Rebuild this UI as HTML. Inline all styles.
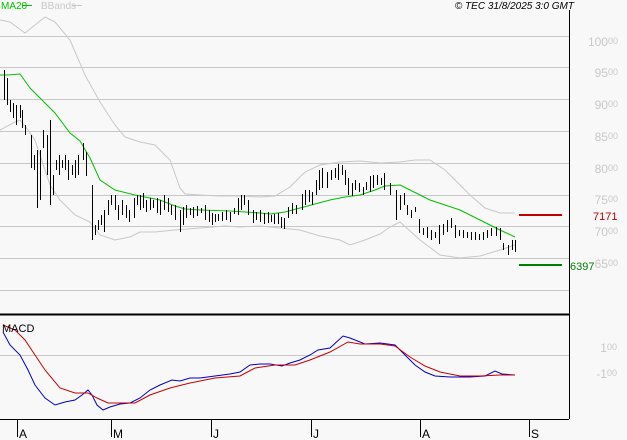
<!DOCTYPE html>
<html><head><meta charset="utf-8"><style>
html,body{margin:0;padding:0;background:#f8f8f8;}
body{width:627px;height:440px;overflow:hidden;position:relative;font-family:"Liberation Sans",sans-serif;}
svg{position:absolute;left:0;top:0}
.ax{fill:#c8c8c8;font-size:12px;}
.ax tspan.s{font-size:9px}
</style></head><body>
<svg width="627" height="440" viewBox="0 0 627 440">
<rect width="627" height="440" fill="#f8f8f8"/>
<g stroke="#c8c8c8" stroke-width="1" shape-rendering="crispEdges">
<line x1="0" y1="36.5" x2="569" y2="36.5"/>
<line x1="0" y1="67.5" x2="569" y2="67.5"/>
<line x1="0" y1="99.5" x2="569" y2="99.5"/>
<line x1="0" y1="131.5" x2="569" y2="131.5"/>
<line x1="0" y1="163.5" x2="569" y2="163.5"/>
<line x1="0" y1="195.5" x2="569" y2="195.5"/>
<line x1="0" y1="226.5" x2="569" y2="226.5"/>
<line x1="0" y1="258.5" x2="569" y2="258.5"/>
<line x1="0" y1="290.5" x2="569" y2="290.5"/>
<line x1="0" y1="355.5" x2="569" y2="355.5"/>
</g>
<g fill="none" stroke="#c8c8c8" stroke-width="1">
<polyline points="0,20 10,22 25,33 35,25 45,17 55,22 70,40 85,75 100,102 115,125 125,137 140,142 155,145 170,160 180,188 185,194 200,195 220,196 240,196 260,197 275,196 290,187 305,172 320,165 340,162 360,161 380,163 400,162 415,160 430,160 445,170 470,195 485,208 500,213 515,213"/>
<polyline points="0,130 15,122 20,120 25,126 35,140 50,185 60,200 75,215 90,222 100,235 115,240 130,237 140,232 155,232 175,230 200,228 225,226 240,227 260,226 280,228 300,230 320,236 340,240 350,245 365,240 380,234 390,227 400,222 420,240 440,255 460,258 480,256 500,250 515,245"/>
</g>
<polyline fill="none" stroke="#00c000" stroke-width="1" points="0,75 8,75 20,74 30,88 45,103 55,113 70,133 80,141 90,158 100,180 115,190 135,195 145,197 160,200 175,206 185,209 200,210 230,211 260,213 270,214 285,212 300,208 315,204 330,200 345,197 360,195 375,190 385,186 400,185 410,190 430,200 460,210 480,220 500,230 515,237"/>
<path transform="translate(0.5,0)" shape-rendering="crispEdges" fill="none" stroke="#000" stroke-width="1" d="M4 70V100M7 78V105M10 100V112M13 103V118M16 105V125M20 105V118M22 110V128M25 125V135M31 135V168M34 155V170M37 150V208M40 150V200M43 130V148M47 135V175M50 120V205M53 175V195M56 160V170M59 155V175M62 160V168M65 155V170M68 160V180M72 165V175M75 160V178M78 155V175M83 143V160M86 152V176M92 185V240M95 225V235M98 220V230M101 215V225M104 210V232M108 200V215M111 195V205M115 195V210M118 205V220M122 200V215M126 205V218M129 210V222M134 198V218M137 195V205M140 195V210M143 193V208M146 200V212M150 198V210M153 200V208M157 198V213M160 200V215M164 195V210M168 198V212M171 205V215M175 205V220M180 210V232M183 207V225M186 205V218M190 208V215M193 207V218M197 206V216M201 208V213M205 205V220M209 210V222M212 213V225M215 214V222M218 214V221M222 212V221M226 210V220M230 212V222M234 208V214M238 198V215M241 195V210M244 195V205M248 200V215M253 210V223M256 212V220M260 210V222M264 213V224M268 212V223M271 215V222M274 214V224M278 213V224M281 217V228M284 218V229M288 207V218M292 203V214M296 205V214M302 194V210M305 190V205M309 190V202M312 192V205M316 180V195M319 170V190M322 168V188M327 172V188M331 170V180M335 168V178M338 164V180M342 165V175M345 170V185M348 178V195M352 183V196M355 180V190M359 183V192M363 187V195M366 182V190M370 176V192M373 175V188M377 175V185M381 178V185M384 173V190M390 183V195M396 190V220M400 195V210M404 193V205M407 205V215M411 210V218M415 207V212M419 219V233M423 228V235M427 227V238M431 230V240M435 232V238M439 225V244M443 224V235M447 220V232M451 218V228M455 225V238M459 230V236M463 230V238M467 232V238M471 232V240M475 232V240M479 234V240M483 232V240M487 230V238M491 228V236M496 227V236M500 228V240M503 243V250M508 245V255M512 240V250M515 240V252"/>
<line x1="519" y1="215" x2="562" y2="215" stroke="#c00000" stroke-width="2"/>
<line x1="519" y1="265" x2="562" y2="265" stroke="#008000" stroke-width="2"/>
<line x1="569.5" y1="10" x2="569.5" y2="419" stroke="#000" stroke-width="1"/>
<line x1="0" y1="314.5" x2="569" y2="314.5" stroke="#000" stroke-width="2"/>
<line x1="0" y1="419.5" x2="569" y2="419.5" stroke="#000" stroke-width="1"/>
<g stroke="#000" stroke-width="1">
<line x1="17.5" y1="420" x2="17.5" y2="437"/>
<line x1="111.5" y1="420" x2="111.5" y2="437"/>
<line x1="211.5" y1="420" x2="211.5" y2="437"/>
<line x1="311.5" y1="420" x2="311.5" y2="437"/>
<line x1="420.5" y1="420" x2="420.5" y2="437"/>
<line x1="529.5" y1="420" x2="529.5" y2="437"/>
</g>
<g font-size="12" fill="#000">
<text x="19" y="438">A</text><text x="113" y="438">M</text><text x="213" y="438">J</text>
<text x="313" y="438">J</text><text x="422" y="438">A</text><text x="531" y="438">S</text>
</g>
<polyline fill="none" stroke="#0000c8" stroke-width="1" points="3,332 10,345 20,355 28,370 35,385 45,398 55,405 65,402 75,400 82,395 88,390 92,395 97,405 103,410 110,407 120,404 130,403 140,398 150,390 160,385 172,380 180,381 190,378 200,378 215,376 230,374 240,372 250,365 260,364 270,364 282,366 290,363 300,360 310,355 318,350 330,348 343,336 350,338 365,344 380,343 395,345 405,355 415,365 425,372 435,376 450,377 470,377 485,376 495,371 502,374 515,375"/>
<polyline fill="none" stroke="#c80000" stroke-width="1" points="3,325 15,330 25,340 35,355 45,370 60,388 75,393 88,393 97,398 108,403 135,403 150,395 170,388 190,383 215,378 240,376 255,368 275,365 295,365 310,360 330,352 348,342 360,344 380,344 395,346 410,357 425,366 440,372 460,376 480,376 500,375 515,375"/>
<text x="2" y="332" font-size="11" fill="#000">MACD</text>
<text x="1" y="9" font-size="10" fill="#00c000">MA20</text>
<line x1="22" y1="5.5" x2="32" y2="5.5" stroke="#00c000"/>
<text x="41" y="9" font-size="10" fill="#c8c8c8">BBands</text>
<line x1="72" y1="5.5" x2="82" y2="5.5" stroke="#c8c8c8"/>
<text x="574" y="9" font-size="10" font-style="italic" fill="#000" text-anchor="end">© TEC 31/8/2025 3:0 GMT</text>
<g class="ax" text-anchor="end">
<text x="618" y="46">100<tspan class="s" dy="-2">00</tspan></text>
<text x="618" y="77">95<tspan class="s" dy="-2">00</tspan></text>
<text x="618" y="109">90<tspan class="s" dy="-2">00</tspan></text>
<text x="618" y="141">85<tspan class="s" dy="-2">00</tspan></text>
<text x="618" y="173">80<tspan class="s" dy="-2">00</tspan></text>
<text x="618" y="204">75<tspan class="s" dy="-2">00</tspan></text>
<text x="618" y="236">70<tspan class="s" dy="-2">00</tspan></text>
<text x="618" y="268">65<tspan class="s" dy="-2">00</tspan></text>
<text x="617" y="352">1<tspan class="s" dy="-2">00</tspan></text>
<text x="617" y="378">-1<tspan class="s" dy="-2">00</tspan></text>
</g>
<text x="593" y="220" font-size="11" fill="#c00000">7171</text>
<text x="570" y="270" font-size="11" fill="#008000">6397</text>
</svg>
</body></html>
